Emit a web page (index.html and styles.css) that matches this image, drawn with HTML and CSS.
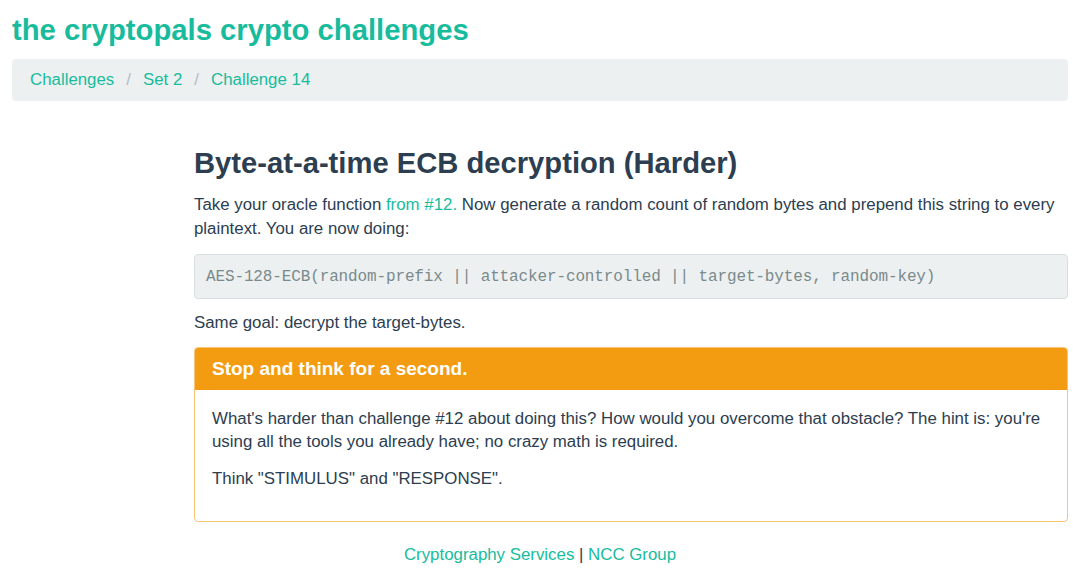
FILE: index.html
```html
<!DOCTYPE html>
<html>
<head>
<meta charset="utf-8">
<link rel="stylesheet" href="styles.css">
</head>
<body>
<div class="page">
  <h1 class="site-title"><a href="#">the cryptopals crypto challenges</a></h1>
  <ol class="breadcrumb">
    <li><a href="#">Challenges</a></li>
    <li class="sep">/</li>
    <li><a href="#">Set 2</a></li>
    <li class="sep">/</li>
    <li><a href="#">Challenge 14</a></li>
  </ol>
  <div class="content">
    <h2 class="challenge-title">Byte-at-a-time ECB decryption (Harder)</h2>
    <p class="text">Take your oracle function <a href="#">from #12.</a> Now generate a random count of random bytes and prepend this string to every plaintext. You are now doing:</p>
    <pre class="code">AES-128-ECB(random-prefix || attacker-controlled || target-bytes, random-key)</pre>
    <p class="text">Same goal: decrypt the target-bytes.</p>
    <div class="panel">
      <div class="panel-heading">Stop and think for a second.</div>
      <div class="panel-body">
        <p class="text">What's harder than challenge #12 about doing this? How would you overcome that obstacle? The hint is: you're using all the tools you already have; no crazy math is required.</p>
        <p class="text">Think "STIMULUS" and "RESPONSE".</p>
      </div>
    </div>
  </div>
  <footer class="footer"><a href="#">Cryptography Services</a> <span class="bar">|</span> <a href="#">NCC Group</a></footer>
</div>
</body>
</html>
```
FILE: styles.css
```css
html, body {
  margin: 0;
  padding: 0;
  background: #ffffff;
}
body {
  font-family: "Liberation Sans", Arial, sans-serif;
  font-size: 16.85px;
  color: #2c3e50;
}
a {
  color: #18bc9c;
  text-decoration: none;
}
.page {
  padding: 0 12px;
}
.site-title {
  margin: 0;
  padding-top: 12px;
  font-size: 29.25px;
  line-height: 36px;
  font-weight: bold;
}
.breadcrumb {
  list-style: none;
  margin: 11px 0 0 0;
  padding: 0 18px;
  height: 42px;
  display: flex;
  align-items: center;
  gap: 11px;
  background: #ecf0f1;
  border-radius: 4px;
  font-size: 16.85px;
}
.breadcrumb li {
  line-height: 40px;
}
.breadcrumb .sep {
  color: #b4bcc2;
  margin: 0 1px;
}
.content {
  margin-left: 182px;
  padding-top: 44px;
}
.challenge-title {
  margin: 0;
  font-size: 29.2px;
  line-height: 36px;
  font-weight: bold;
}
.text {
  margin: 0;
  line-height: 24px;
}
.content > .text:first-of-type {
  margin-top: 12px;
}
.code {
  margin: 13px 0 12px 0;
  padding: 0 11px;
  height: 45px;
  box-sizing: border-box;
  display: flex;
  align-items: center;
  background: #ecf0f1;
  border: 1px solid #d9dee0;
  border-radius: 4px;
  font-family: "Liberation Mono", monospace;
  font-size: 16px;
  letter-spacing: -0.13px;
  color: #7b8a8b;
}
.panel {
  margin-top: 12px;
  border: 1px solid #f7c47a;
  border-radius: 4px;
  height: 175px;
  box-sizing: border-box;
}
.panel-heading {
  background: #f39c12;
  color: #ffffff;
  font-weight: bold;
  font-size: 19px;
  height: 42px;
  line-height: 42px;
  padding: 0 17px;
  border-radius: 3px 3px 0 0;
}
.panel-body {
  padding: 17px 17px;
}
.panel-body .text {
  line-height: 23px;
}
.panel-body .text + .text {
  margin-top: 14px;
}
.footer {
  text-align: center;
  margin-top: 23px;
  font-size: 16.85px;
}
.footer .bar {
  color: #2c3e50;
}
```
